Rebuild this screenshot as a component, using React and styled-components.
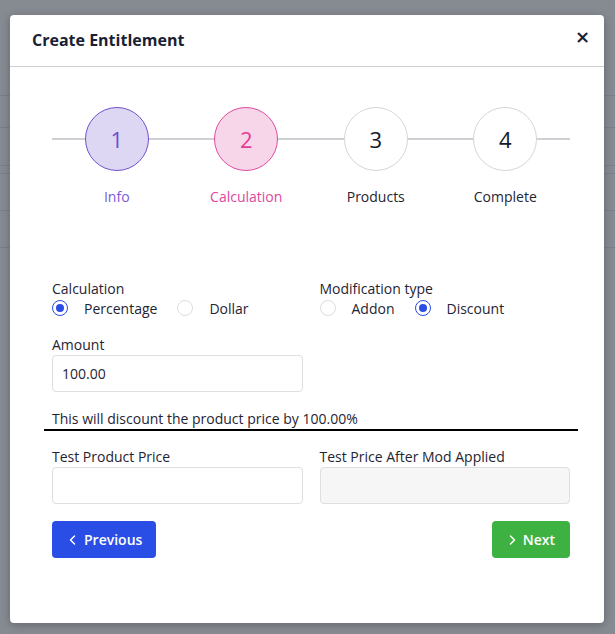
import React from "react";
import styled, { createGlobalStyle } from "styled-components";

const Global = createGlobalStyle`
  html, body { margin: 0; padding: 0; }
  body {
    background: #868a91;
    font-family: "Open Sans", "Noto Sans", sans-serif;
    color: #1f2433;
    height: 634px;
    overflow: hidden;
  }
  * { box-sizing: border-box; }
`;

const Backdrop = styled.div`
  position: relative;
  height: 634px;
  padding: 15px 11px 0 10px;
`;

const BgLines = styled.div`
  position: absolute;
  inset: 0;
  pointer-events: none;
`;

const BgLine = styled.div`
  position: absolute;
  left: 0;
  right: 0;
  height: 1px;
  background: #7a7e86;
`;

const Modal = styled.div`
  position: relative;
  width: 594px;
  height: 608px;
  background: #fff;
  border-radius: 4px;
  box-shadow: 0 2px 8px rgba(0, 0, 0, 0.25);
  display: flex;
  flex-direction: column;
`;

const Header = styled.div`
  height: 52px;
  border-bottom: 1px solid #cfd0d4;
  display: flex;
  align-items: center;
  justify-content: space-between;
  padding: 0 14px 0 22px;
`;

const Title = styled.h2`
  margin: 0;
  font-size: 16px;
  font-weight: 700;
  color: #1a1f33;
  margin-top: -2px;
`;

const Close = styled.button`
  border: 0;
  background: none;
  padding: 0;
  font-size: 18px;
  font-weight: 700;
  color: #1a1f33;
  line-height: 1;
  margin-top: -8px;
  font-family: "DejaVu Sans", sans-serif;
`;

const Body = styled.div`
  padding: 40px 26px 0 34px;
`;

const Inner = styled.div`
  padding: 0 8px;
`;

const Stepper = styled.div`
  display: grid;
  grid-template-columns: repeat(4, 1fr);
`;

const Step = styled.div`
  position: relative;
  display: flex;
  flex-direction: column;
  align-items: center;
  &::before {
    content: "";
    position: absolute;
    left: 0;
    right: 0;
    top: 31px;
    height: 2px;
    background: #cfd0d4;
  }
`;

const themes = {
  done: { bg: "#ded7f3", border: "#6f50cf", color: "#6a4fd0", label: "#7a5bd8" },
  active: { bg: "#f8d6ea", border: "#e04a9f", color: "#df3f98", label: "#e0479e" },
  todo: { bg: "#fff", border: "#d6d6d9", color: "#151a2b", label: "#1f2433" },
};

const Circle = styled.div`
  position: relative;
  width: 64px;
  height: 64px;
  border-radius: 50%;
  border: 1px solid ${(p) => themes[p.$state].border};
  background: ${(p) => themes[p.$state].bg};
  color: ${(p) => themes[p.$state].color};
  display: flex;
  align-items: center;
  justify-content: center;
  font-size: 22px;
`;

const StepLabel = styled.div`
  margin-top: 16px;
  font-size: 14px;
  line-height: 20px;
  color: ${(p) => themes[p.$state].label};
`;

const Row = styled.div`
  display: grid;
  grid-template-columns: 1fr 1fr;
  column-gap: 17px;
  margin-top: ${(p) => p.$mt || 0}px;
`;

const Field = styled.div`
  display: flex;
  flex-direction: column;
`;

const Label = styled.div`
  font-size: 14px;
  line-height: 20px;
  color: #1f2433;
`;

const RadioGroup = styled.div`
  display: flex;
  align-items: center;
  height: 18px;
  gap: 20px;
`;

const RadioItem = styled.label`
  display: flex;
  align-items: center;
  gap: 16px;
  font-size: 14px;
  color: #1f2433;
`;

const RadioDot = styled.span`
  width: 16px;
  height: 16px;
  border-radius: 50%;
  border: 1px solid ${(p) => (p.$checked ? "#2a4de6" : "#dcdde0")};
  display: flex;
  align-items: center;
  justify-content: center;
  &::after {
    content: "";
    width: 8px;
    height: 8px;
    border-radius: 50%;
    background: ${(p) => (p.$checked ? "#2a4de6" : "transparent")};
  }
`;

const Input = styled.div`
  height: 37px;
  border: 1px solid #dedfe2;
  border-radius: 4px;
  background: ${(p) => (p.$disabled ? "#f6f6f6" : "#fff")};
  display: flex;
  align-items: center;
  padding: 0 9px;
  font-size: 14px;
  color: #1f2433;
`;

const Note = styled.div`
  margin: 17px -8px 0;
  padding: 0 8px;
  border-bottom: 2px solid #000;
  font-size: 14px;
  line-height: 20px;
  color: #1f2433;
`;

const Actions = styled.div`
  display: flex;
  justify-content: space-between;
  margin-top: 17px;
`;

const Button = styled.button`
  height: 37px;
  border: 0;
  border-radius: 4px;
  background: ${(p) => p.$bg};
  color: #fff;
  font-family: inherit;
  font-size: 14px;
  font-weight: 600;
  display: flex;
  align-items: center;
  gap: 5px;
  padding: 0 ${(p) => p.$pr}px 0 ${(p) => p.$pl}px;
`;

const Chevron = ({ dir }) => (
  <svg width="12" height="12" viewBox="0 0 12 12" fill="none">
    <path
      d={dir === "left" ? "M7.5 2 L3.5 6 L7.5 10" : "M4.5 2 L8.5 6 L4.5 10"}
      stroke="#fff"
      strokeWidth="1.5"
      strokeLinecap="round"
      strokeLinejoin="round"
    />
  </svg>
);

const steps = [
  { n: 1, label: "Info", state: "done" },
  { n: 2, label: "Calculation", state: "active" },
  { n: 3, label: "Products", state: "todo" },
  { n: 4, label: "Complete", state: "todo" },
];

const lines = [95, 127, 165, 173, 210, 247];

export default function App() {
  return (
    <>
      <Global />
      <Backdrop>
        <BgLines>
          {lines.map((y) => (
            <BgLine key={y} style={{ top: y }} />
          ))}
        </BgLines>
        <Modal>
          <Header>
            <Title>Create Entitlement</Title>
            <Close aria-label="Close">×</Close>
          </Header>
          <Body>
            <Inner>
              <Stepper>
                {steps.map((s) => (
                  <Step key={s.n}>
                    <Circle $state={s.state}>{s.n}</Circle>
                    <StepLabel $state={s.state}>{s.label}</StepLabel>
                  </Step>
                ))}
              </Stepper>

              <Row $mt={72}>
                <Field>
                  <Label>Calculation</Label>
                  <RadioGroup>
                    <RadioItem>
                      <RadioDot $checked />
                      Percentage
                    </RadioItem>
                    <RadioItem>
                      <RadioDot />
                      Dollar
                    </RadioItem>
                  </RadioGroup>
                </Field>
                <Field>
                  <Label>Modification type</Label>
                  <RadioGroup>
                    <RadioItem>
                      <RadioDot />
                      Addon
                    </RadioItem>
                    <RadioItem>
                      <RadioDot $checked />
                      Discount
                    </RadioItem>
                  </RadioGroup>
                </Field>
              </Row>

              <Row $mt={18}>
                <Field>
                  <Label>Amount</Label>
                  <Input>100.00</Input>
                </Field>
              </Row>

              <Note>This will discount the product price by 100.00%</Note>

              <Row $mt={16}>
                <Field>
                  <Label>Test Product Price</Label>
                  <Input />
                </Field>
                <Field>
                  <Label>Test Price After Mod Applied</Label>
                  <Input $disabled />
                </Field>
              </Row>

              <Actions>
                <Button $bg="#2a4de6" $pl={15} $pr={14}>
                  <Chevron dir="left" />
                  Previous
                </Button>
                <Button $bg="#3db243" $pl={14} $pr={15}>
                  <Chevron dir="right" />
                  Next
                </Button>
              </Actions>
            </Inner>
          </Body>
        </Modal>
      </Backdrop>
    </>
  );
}
